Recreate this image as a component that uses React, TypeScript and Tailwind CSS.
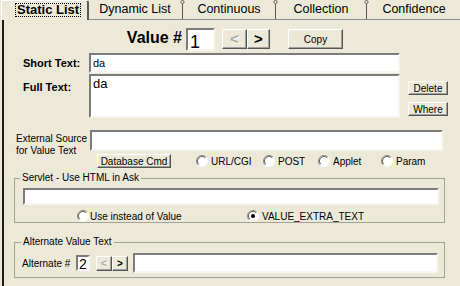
import React from 'react'

const sunken = 'border-2 border-t-[#7b7b7b] border-l-[#7b7b7b] border-b-[#f7f6f1] border-r-[#f7f6f1] bg-white'
const raised = 'border border-t-white border-l-white border-b-[#555] border-r-[#555] shadow-[inset_-1px_-1px_0_#a0a0a0] bg-[#ece9d8] flex items-center justify-center'

function Radio({ on }: { on?: boolean }) {
  return (
    <svg width="12" height="12" viewBox="0 0 12 12" className="shrink-0">
      <circle cx="6" cy="6" r="5" fill="#fff" />
      <path d="M9.9 2.1A5.5 5.5 0 0 0 2.1 9.9" fill="none" stroke="#8a8a8a" />
      <path d="M9.2 2.8A4.5 4.5 0 0 0 2.8 9.2" fill="none" stroke="#606060" />
      <path d="M2.1 9.9A5.5 5.5 0 0 0 9.9 2.1" fill="none" stroke="#fff" />
      {on && <circle cx="6" cy="6" r="2" fill="#000" />}
    </svg>
  )
}

function Sep() {
  return (
    <svg width="3" height="19" viewBox="0 0 3 19" className="shrink-0 overflow-visible">
      <path d="M1.5 4V19" stroke="#5a5a5a" />
      <circle cx="1.5" cy="2" r="1.6" fill="none" stroke="#5a5a5a" strokeWidth="0.9" />
    </svg>
  )
}

function Tab({ label, w }: { label: string; w: string }) {
  return <div className={`flex h-[19px] items-center justify-center text-[12.5px] leading-none ${w}`}>{label}</div>
}

export default function App() {
  return (
    <div className="h-[286px] w-[460px] overflow-hidden bg-[#ece9d8] text-black font-['Liberation_Sans',Arial,sans-serif]">
      <div className="flex h-[19px] items-end">
        <div className="relative z-10 -mb-px ml-px flex h-[20px] w-[88px] shrink-0 items-start rounded-tr-[3px] border-l border-t border-r-2 border-l-white border-t-white border-r-[#5a5a5a] bg-[#ece9d8] pl-[13px] pt-[2px]">
          <span className="border border-dotted border-black px-px text-[13px] font-bold leading-[12px]">Static List</span>
        </div>
        <Tab label="Dynamic List" w="w-[92px]" />
        <Sep />
        <Tab label="Continuous" w="w-[90px]" />
        <Sep />
        <Tab label="Collection" w="w-[88px]" />
        <Sep />
        <Tab label="Confidence" w="flex-1" />
      </div>

      <div className="ml-[2px] h-[267px] border-l-2 border-t border-l-[#1c1c1c] border-t-[#8a8a8a] text-[10px]">
        {/* value number */}
        <div className="mt-[8px] flex h-[23px] items-start">
          <div className="ml-[121px] w-[61px] pr-[4px] text-right text-[16px] font-bold leading-[20px]">Value #</div>
          <div className={`${sunken} h-[23px] w-[29px] pl-[2px] pt-[3px] text-[18px] leading-[18px]`}>1</div>
          <div className={`${raised} ml-[7px] mt-px h-[20px] w-[25px] text-[15px] font-bold text-[#a8a8a8] [text-shadow:1px_1px_0_#fff]`}>&lt;</div>
          <div className={`${raised} mt-px h-[20px] w-[23px] text-[15px] font-bold`}>&gt;</div>
          <div className={`${raised} ml-[18px] mt-px h-[20px] w-[55px]`}>Copy</div>
        </div>

        {/* short text */}
        <div className="mt-[2px] flex h-[20px] items-center">
          <div className="ml-[19px] w-[66px] text-[11px] font-bold">Short Text:</div>
          <div className={`${sunken} h-[20px] w-[311px] pl-[2px] text-[11px] leading-[16px]`}>da</div>
        </div>

        {/* full text */}
        <div className="mt-px flex h-[44px]">
          <div className="ml-[19px] w-[66px] pt-[7px] text-[11px] font-bold leading-[12px]">Full Text:</div>
          <div className={`${sunken} h-[44px] w-[311px] pl-[2px] pt-px text-[13px] leading-[14px]`}>da</div>
          <div className="ml-[8px] flex flex-col">
            <div className={`${raised} mt-[7px] h-[14px] w-[40px]`}>Delete</div>
            <div className={`${raised} mt-[7px] h-[14px] w-[40px]`}>Where</div>
          </div>
        </div>

        {/* external source */}
        <div className="mt-[12px] flex h-[21px]">
          <div className="ml-[12px] w-[74px] pt-[3px] leading-[12px]">
            External Source
            <br />
            for Value Text
          </div>
          <div className={`${sunken} h-[21px] w-[353px]`} />
        </div>

        <div className="mt-[3px] flex h-[14px] items-center">
          <div className={`${raised} ml-[93px] h-[14px] w-[74px]`}>Database Cmd</div>
          <div className="ml-[25px] flex w-[67px] items-center gap-[3px]"><Radio />URL/CGI</div>
          <div className="flex w-[55px] items-center gap-[3px]"><Radio />POST</div>
          <div className="flex w-[63px] items-center gap-[3px]"><Radio />Applet</div>
          <div className="flex items-center gap-[3px]"><Radio />Param</div>
        </div>

        {/* servlet */}
        <fieldset className="ml-[10px] mt-[4px] w-[431px] border border-[#a3a296]">
          <legend className="ml-[5px] px-[2px] leading-[12px]">Servlet - Use HTML in Ask</legend>
          <div className={`${sunken} ml-[8px] mt-[4px] h-[17px] w-[416px]`} />
          <div className="mt-[5px] flex h-[12px] items-center">
            <div className="ml-[62px] flex w-[170px] items-center gap-px"><Radio />Use instead of Value</div>
            <div className="flex items-center gap-[3px]"><Radio on />VALUE_EXTRA_TEXT</div>
          </div>
        </fieldset>

        {/* alternate */}
        <fieldset className="ml-[10px] mt-[13px] w-[431px] border border-[#a3a296] pb-[4px]">
          <legend className="ml-[6px] px-[2px] leading-[12px]">Alternate Value Text</legend>
          <div className="mt-[5px] flex h-[20px] items-center">
            <div className="ml-[7px] w-[54px]">Alternate #</div>
            <div className={`${sunken} h-[16px] w-[14px] overflow-hidden pl-px pt-px text-[14px] leading-[13px]`}>2</div>
            <div className={`${raised} ml-[6px] h-[15px] w-[16px] text-[10px] font-bold text-[#a8a8a8] [text-shadow:1px_1px_0_#fff]`}>&lt;</div>
            <div className={`${raised} h-[15px] w-[16px] text-[10px] font-bold`}>&gt;</div>
            <div className={`${sunken} ml-[5px] h-[20px] w-[305px]`} />
          </div>
        </fieldset>
      </div>
    </div>
  )
}
